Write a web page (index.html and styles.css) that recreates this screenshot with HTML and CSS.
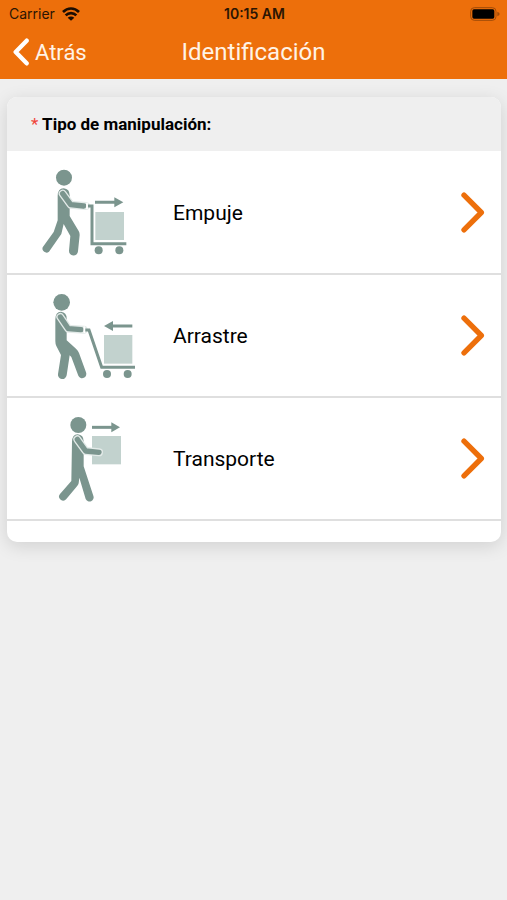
FILE: index.html
```html
<!DOCTYPE html>
<html lang="es">
<head>
<meta charset="utf-8">
<meta name="viewport" content="width=device-width, initial-scale=1">
<title>Identificación</title>
<link rel="stylesheet" href="styles.css">
</head>
<body>
<header class="topbar">
  <div class="status">
    <div class="carrier">
      <span>Carrier</span>
      <svg class="wifi" viewBox="0 0 54 40" aria-hidden="true">
        <path class="wave" d="M3 14C17 0 37 0 51 14"/>
        <path class="wave" d="M11 24C20 15 34 15 43 24"/>
        <path d="M27 40L17 31C23 26 31 26 37 31Z"/>
      </svg>
    </div>
    <div class="clock">10:15 AM</div>
    <svg class="battery" viewBox="0 0 90 42" aria-hidden="true">
      <rect class="shell" x="2" y="2" width="76" height="38" rx="11"/>
      <rect x="7" y="7" width="66" height="28" rx="5"/>
      <path class="cap" d="M82 14Q89 17 89 21T82 28Z"/>
    </svg>
  </div>
  <nav class="nav">
    <a class="back" href="#">
      <svg class="back-icon" viewBox="0 0 48 84" aria-hidden="true"><path d="M41 8L8 42L41 76"/></svg>
      <span>Atrás</span>
    </a>
    <h1 class="title">Identificación</h1>
  </nav>
</header>
<main class="content">
  <section class="card">
    <h2 class="card-head"><span class="required">*</span> Tipo de manipulación:</h2>
    <ul class="options">
      <li>
        <button class="option" type="button">
          <svg class="figure" viewBox="0 0 345 315" aria-hidden="true">
            <rect class="box" x="196" y="156" width="86" height="84"/>
            <circle cx="102" cy="53" r="24"/>
            <path d="M83 108Q83 86 101 85Q119 87 119 106V168L146 213Q149 218 149 225L144 274A12 12 0 0 1 117 272L121 228L101 192L94 222L57 275A12 12 0 0 1 38 262L71 216L83 181Z"/>
            <path class="halo" d="M98 101L122 134L168 138"/>
            <path class="arm" d="M98 101L122 134L161 138"/>
            <path class="cut" d="M171 128V148"/>
            <path class="frame" d="M174 138H186V251H289"/>
            <circle cx="206" cy="271" r="12"/><circle cx="268" cy="271" r="12"/>
            <path class="shaft" d="M195 127H260"/><path d="M253 112L280 127L253 142Z"/>
          </svg>
          <span class="label">Empuje</span>
          <svg class="chevron" viewBox="0 0 72 122" aria-hidden="true"><path d="M9 9L61 61L9 113"/></svg>
        </button>
      </li>
      <li>
        <button class="option" type="button">
          <svg class="figure" viewBox="0 0 345 315" aria-hidden="true">
            <rect class="box" x="222" y="156" width="85" height="86"/>
            <circle cx="95" cy="58" r="25"/>
            <path d="M76 109Q76 87 93 86Q110 88 110 106V172L138 197Q144 202 147 210L168 268A12 12 0 0 1 145 278L124 222L119 217L110 277A12 12 0 0 1 84 273L93 216L79 189Q76 183 76 174Z"/>
            <path class="halo" d="M91 102L115 137L161 140"/>
            <path class="arm" d="M91 102L115 137L153 140"/>
            <path class="cut" d="M163 130V150"/>
            <path class="frame" d="M166 141H177L215 253H315"/>
            <circle cx="231" cy="273" r="12"/><circle cx="293" cy="273" r="12"/>
            <path class="shaft" d="M244 129H307"/><path d="M249 114L222 129L249 144Z"/>
          </svg>
          <span class="label">Arrastre</span>
          <svg class="chevron" viewBox="0 0 72 122" aria-hidden="true"><path d="M9 9L61 61L9 113"/></svg>
        </button>
      </li>
      <li>
        <button class="option" type="button">
          <svg class="figure" viewBox="0 0 345 315" aria-hidden="true">
            <rect class="box" x="186" y="90" width="87" height="85"/>
            <circle cx="145" cy="57" r="24"/>
            <path d="M126 108Q126 86 143 85Q161 87 161 106V181L190 269A12 12 0 0 1 167 279L148 215L146 232Q145 237 141 241L109 279A12 12 0 0 1 90 264L124 225Z"/>
            <path class="halo" d="M142 100L167 135L207 139"/>
            <path class="arm" d="M142 100L167 135L207 139"/>
            <path class="shaft" d="M186 64H252"/><path d="M244 49L270 64L244 79Z"/>
          </svg>
          <span class="label">Transporte</span>
          <svg class="chevron" viewBox="0 0 72 122" aria-hidden="true"><path d="M9 9L61 61L9 113"/></svg>
        </button>
      </li>
    </ul>
  </section>
</main>
</body>
</html>
```
FILE: styles.css
```css
* {
  box-sizing: border-box;
}

body {
  margin: 0;
  min-height: 100vh;
  background: #efefef;
  color: #000;
  font-family: Roboto, "Liberation Sans", sans-serif;
}

.topbar {
  padding-bottom: 2px;
  background: #ed6f0b;
}

.status {
  display: grid;
  grid-template-columns: 1fr auto 1fr;
  align-items: center;
  height: 27px;
  padding: 0 7px 0 9px;
  font-family: Inter, "Liberation Sans", sans-serif;
  font-size: 14px;
  color: #2b1503;
}

.carrier {
  display: flex;
  align-items: center;
  gap: 7px;
}

.wifi {
  width: 18px;
  height: 14px;
  fill: #1c0d02;
}

.wave {
  fill: none;
  stroke: #1c0d02;
  stroke-width: 8;
}

.clock {
  font-weight: 600;
}

.battery {
  justify-self: end;
  width: 30px;
  height: 14px;
}

.shell {
  fill: none;
  stroke: #a04b09;
  stroke-width: 3;
}

.cap {
  fill: #a04b09;
}

.nav {
  display: grid;
  grid-template-columns: 1fr auto 1fr;
  align-items: center;
  height: 50px;
  padding: 0 13px;
  color: #fff3e6;
}

.back {
  display: flex;
  align-items: center;
  gap: 6px;
  color: inherit;
  font-size: 22px;
  text-decoration: none;
}

.back-icon {
  width: 16px;
  height: 28px;
  fill: none;
  stroke: #fff;
  stroke-width: 13;
  stroke-linecap: round;
  stroke-linejoin: round;
}

.title {
  margin: 0;
  font-size: 24px;
  font-weight: 400;
}

.content {
  padding: 18px 6px 0 7px;
}

.card {
  padding-bottom: 21px;
  overflow: hidden;
  border-radius: 10px;
  background: #fff;
  box-shadow: 0 4px 18px rgba(0, 0, 0, 0.13);
}

.card-head {
  margin: 0;
  padding: 0 24px;
  background: #efefef;
  font-size: 17px;
  font-weight: 700;
  line-height: 54px;
}

.required {
  color: #f0443a;
  font-weight: 400;
}

.options {
  margin: 0;
  padding: 1px 0 0;
  list-style: none;
}

.option {
  display: flex;
  align-items: center;
  width: 100%;
  height: 123px;
  padding: 0 16px 0 23px;
  border: 0;
  border-bottom: 2px solid #dfdfdf;
  background: #fff;
  color: #000;
  font: inherit;
  font-size: 21px;
  text-align: left;
}

.figure {
  width: 115px;
  height: 105px;
  fill: #7b958e;
}

.box {
  fill: #c2d2ce;
}

.arm,
.halo,
.frame,
.shaft,
.cut {
  fill: none;
  stroke: #7b958e;
  stroke-linecap: round;
  stroke-linejoin: round;
}

.arm {
  stroke-width: 16;
}

.halo {
  stroke: #e3eae8;
  stroke-width: 24;
}

.cut {
  stroke: #fff;
  stroke-width: 5;
  stroke-linecap: butt;
}

.frame {
  stroke-width: 9;
  stroke-linecap: butt;
  stroke-linejoin: miter;
}

.shaft {
  stroke-width: 9;
  stroke-linecap: butt;
}

.label {
  flex: 1;
  margin-left: 28px;
}

.chevron {
  width: 24px;
  height: 41px;
  fill: none;
  stroke: #ed6f0b;
  stroke-width: 16;
  stroke-linecap: round;
  stroke-linejoin: round;
}
```
